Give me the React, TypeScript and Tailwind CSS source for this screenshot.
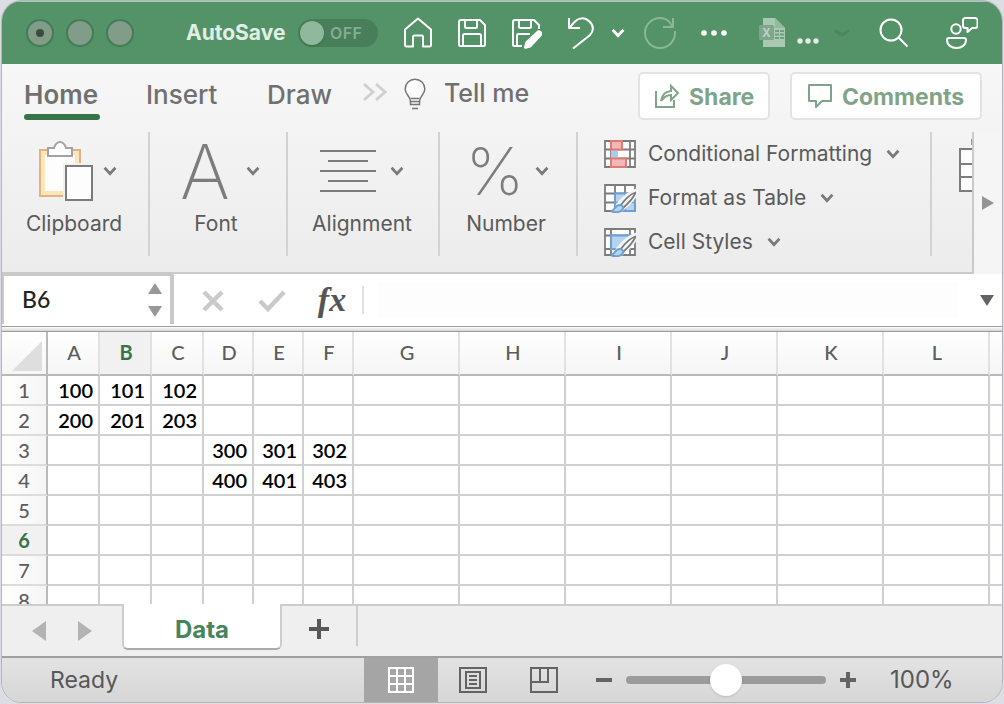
import React from "react";

const columns = ["A", "B", "C", "D", "E", "F", "G", "H", "I", "J", "K", "L", ""];

const rows: Record<string, number>[] = [
  { A: 100, B: 101, C: 102 },
  { A: 200, B: 201, C: 203 },
  { D: 300, E: 301, F: 302 },
  { D: 400, E: 401, F: 403 },
  {},
  {},
  {},
  {},
];

const activeColumn = "B";
const activeRow = 6;

function Chevron({ className = "text-[#7a7a7a]" }: { className?: string }) {
  return (
    <svg viewBox="0 0 14 10" className={`h-[10px] w-[14px] shrink-0 ${className}`} fill="none" stroke="currentColor" strokeWidth="2.8" aria-hidden="true">
      <path d="M1.6 1.8 7 7.6l5.4-5.8" />
    </svg>
  );
}

function IconButton({ label, className = "", children }: { label: string; className?: string; children: React.ReactNode }) {
  return (
    <button type="button" aria-label={label} className={`flex shrink-0 items-center justify-center ${className}`}>
      {children}
    </button>
  );
}

function Stroke({ children, className = "h-8 w-8 text-white" }: { children: React.ReactNode; className?: string }) {
  return (
    <svg viewBox="0 0 32 32" className={className} fill="none" stroke="currentColor" strokeWidth="2" strokeLinejoin="round" aria-hidden="true">
      {children}
    </svg>
  );
}

function TitleBar() {
  return (
    <header className="flex h-[63px] shrink-0 items-center border-t border-[#a9cdb4] bg-[#549368] pb-px pl-6">
      <div className="flex gap-3">
        <button type="button" aria-label="Close" className="flex size-7 items-center justify-center rounded-full border-2 border-[#427d54] bg-[#829c8a]">
          <span className="size-2 rounded-full bg-[#3a4c3f]" />
        </button>
        <button type="button" aria-label="Minimize" className="size-7 rounded-full border-2 border-[#427d54] bg-[#829c8a]" />
        <button type="button" aria-label="Zoom window" className="size-7 rounded-full border-2 border-[#427d54] bg-[#829c8a]" />
      </div>
      <span id="autosave" className="ml-[52px] w-[100px] whitespace-nowrap text-[21px] font-bold text-[#e2eee5]">AutoSave</span>
      <button type="button" role="switch" aria-checked="false" aria-labelledby="autosave" className="ml-3 flex h-7 w-20 shrink-0 items-center rounded-full bg-[#487e59] pl-[2px]">
        <span className="size-6 rounded-full bg-[#8fb99c] shadow" />
        <span className="ml-[6px] text-[16px] font-semibold tracking-wide text-[#83ae90]">OFF</span>
      </button>

      <div className="ml-6 flex items-center gap-[22px]">
        <IconButton label="Home page">
          <Stroke>
            <path d="M3 28V12.5L16 1.5l13 11V28a1.5 1.5 0 0 1-1.5 1.5H21V20a1.5 1.5 0 0 0-1.5-1.5h-7A1.5 1.5 0 0 0 11 20v9.500H4.500A1.500 1.500 0 0 1 3 28Z" />
          </Stroke>
        </IconButton>
        <IconButton label="Save">
          <Stroke>
            <path d="M5 3h19l5 5v19.500a1.500 1.500 0 0 1-1.500 1.500H4.500A1.500 1.500 0 0 1 3 27.500V5a2 2 0 0 1 2-2Z" />
            <path d="M9 3v6.500a1.500 1.500 0 0 0 1.500 1.500h9a1.500 1.500 0 0 0 1.500-1.500V3M7 29V18.500A1.500 1.500 0 0 1 8.500 17h15a1.500 1.500 0 0 1 1.500 1.500V29" />
          </Stroke>
        </IconButton>
        <IconButton label="Save as">
          <Stroke>
            <path d="M29 12V8l-5-5H5a2 2 0 0 0-2 2v22.500A1.500 1.500 0 0 0 4.500 29H12" />
            <path d="M9 3v6.500a1.500 1.500 0 0 0 1.500 1.500h9a1.500 1.500 0 0 0 1.500-1.500V3M7 29V18.500A1.500 1.500 0 0 1 8.500 17H20" />
            <path d="m15.500 30.300 1.500-5L27.500 15.500a1.800 1.800 0 0 1 2.800 2.400L20 29Z" fill="currentColor" strokeWidth="3" />
          </Stroke>
        </IconButton>
      </div>
      <IconButton label="Undo" className="ml-[22px]">
        <Stroke>
          <path d="M5 1v10h11M5.500 10.500 10.500 5C15 .2 21 .3 25.500 4.500c4.500 4.300 4.500 9.500.3 13.700L9 31.500" />
        </Stroke>
      </IconButton>
      <IconButton label="Undo history" className="ml-[15px]">
        <Chevron className="text-white" />
      </IconButton>
      <IconButton label="Redo" className="ml-[19px]">
        <Stroke className="h-8 w-8 text-[#8ab798]">
          <path d="M29 1v9H19M28.500 10C26 4 21.500 1 16 1A15 15 0 1 0 31 16v-2" />
        </Stroke>
      </IconButton>
      <IconButton label="More commands" className="ml-6">
        <svg viewBox="0 0 28 8" className="h-2 w-7 fill-white" aria-hidden="true">
          <circle cx="4" cy="4" r="2.800" />
          <circle cx="14" cy="4" r="2.800" />
          <circle cx="24" cy="4" r="2.800" />
        </svg>
      </IconButton>
      <button type="button" className="ml-[30px] flex shrink-0 items-center" aria-label="Document menu">
        <svg viewBox="0 0 28 32" className="h-8 w-7" aria-hidden="true">
          <path d="M5 1h12l10 10v19H5Z" fill="#a9c9b3" />
          <path d="M17 1v10h10Z" fill="#93b99f" />
          <path d="M17 13h4v2h-4zm5 0h4v2h-4zm-5 3.500h4v2h-4zm5 0h4v2h-4zm-5 3.500h4v2h-4zm5 0h4v2h-4z" fill="#6fa07f" />
          <rect x="1" y="8" width="15" height="15" rx="1.500" fill="#7fa68c" />
          <text x="8.500" y="20" textAnchor="middle" fontSize="12" fontWeight="700" fill="#b9d3c1">X</text>
        </svg>
        <svg viewBox="0 0 24 8" className="mt-4 ml-[10px] h-2 w-6 fill-[#e2eee5]" aria-hidden="true">
          <circle cx="4" cy="4" r="2.700" />
          <circle cx="12" cy="4" r="2.700" />
          <circle cx="20" cy="4" r="2.700" />
        </svg>
        <svg viewBox="0 0 16 8" className="ml-[14px] h-2 w-4" fill="none" stroke="#4a8660" strokeWidth="3" aria-hidden="true">
          <path d="m1 1.500 7 4.500 7-4.500" />
        </svg>
      </button>
      <div className="ml-auto flex items-center gap-9 pr-6">
        <IconButton label="Search">
          <Stroke>
            <circle cx="13" cy="13" r="10.500" />
            <path d="m20.500 20.500 9 9" />
          </Stroke>
        </IconButton>
        <IconButton label="Account">
          <Stroke>
            <circle cx="10" cy="12" r="4.700" />
            <path d="M3 21h15a2 2 0 0 1 2 2c0 5-4.500 8-9.500 8S1 28 1 23a2 2 0 0 1 2-2Z" />
            <path d="M19 1h10a2.500 2.500 0 0 1 2.500 2.500v5A2.500 2.500 0 0 1 29 11h-3l-4.500 4v-4H19.500A2.500 2.500 0 0 1 17 8.500v-5A2.500 2.500 0 0 1 19 1Z" />
          </Stroke>
        </IconButton>
      </div>
    </header>
  );
}

function RibbonTabs() {
  return (
    <div className="flex h-[68px] shrink-0 items-start pl-[22px] text-[26px] text-[#707070]">
      <nav aria-label="Ribbon tabs" className="flex items-start">
        <a href="#home" aria-current="page" className="flex h-14 w-19 flex-col whitespace-nowrap pt-[10px] font-semibold">
          <span className="flex flex-1 items-center">Home</span>
          <span className="h-[6px] rounded-full bg-[#38734a]" />
        </a>
        <a href="#insert" className="ml-[46px] flex h-[50px] w-[74px] items-center pt-[10px] font-medium">Insert</a>
        <a href="#draw" className="ml-[47px] flex h-[50px] w-[65px] items-center pt-[10px] font-medium">Draw</a>
      </nav>
      <IconButton label="More tabs" className="ml-[30px] h-14">
        <svg viewBox="0 0 26 20" className="h-5 w-[26px]" fill="none" stroke="#d0d0d0" strokeWidth="3" aria-hidden="true">
          <path d="m2 2 9 8-9 8M14 2l9 8-9 8" />
        </svg>
      </IconButton>
      <button type="button" className="ml-4 flex h-[50px] items-center pt-[10px] font-medium">
        <svg viewBox="0 0 22 32" className="h-8 w-[22px]" fill="none" stroke="#767676" strokeWidth="1.500" aria-hidden="true">
          <path d="M6.500 23.500C6.500 18 1.200 17 1.200 11a9.800 9.800 0 0 1 19.600 0c0 6-5.300 7-5.300 12.500Z" fill="#fdfdfd" />
          <path d="M6.500 20.500h9M6.500 23v3.500h9V23M8 30.500h6" />
        </svg>
        <span className="ml-[18px] text-[25px]">Tell me</span>
      </button>
      <div className="ml-auto flex gap-5 pt-2 pr-5 text-[23px] font-bold text-[#80a48a]">
        <button type="button" className="flex h-12 w-[132px] items-center rounded-[5px] border-2 border-[#e3e3e3] bg-white pl-[14px]">
          <svg viewBox="0 0 26 26" className="h-[26px] w-[26px]" fill="none" stroke="currentColor" strokeWidth="2" aria-hidden="true">
            <path d="M2 8v16h18v-7M7 18c1-6 4-9.500 10-10V3l7 7-7 7v-5c-4 0-7 2-10 6Z" />
          </svg>
          <span className="ml-[9px] pt-[2px]">Share</span>
        </button>
        <button type="button" className="flex h-12 w-[192px] items-center rounded-[5px] border-2 border-[#e3e3e3] bg-white pl-4">
          <svg viewBox="0 0 24 26" className="h-[26px] w-6" fill="none" stroke="currentColor" strokeWidth="2" strokeLinejoin="round" aria-hidden="true">
            <path d="M1 2h22v16H14l-6 6v-6H1Z" />
          </svg>
          <span className="ml-[10px] pt-[2px]">Comments</span>
        </button>
      </div>
    </div>
  );
}

function RibbonGroup({ label, className, children }: { label: string; className: string; children: React.ReactNode }) {
  return (
    <button type="button" className={`flex h-31 shrink-0 flex-col items-center border-r-2 border-[#d2d2d2] ${className}`}>
      <span className="flex h-[78px] items-center">{children}</span>
      <span className="h-7 whitespace-nowrap text-[21px] leading-7">{label}</span>
    </button>
  );
}

function Brush() {
  return (
    <g>
      <path d="M31.500 8C25 10 18 17 14 22l4 4c6-5 12-10 14-16Z" fill="#f3f3f3" stroke="#f3f3f3" strokeWidth="4" />
      <path d="M31.500 9.500c-5 1.500-11 7.500-15 13l2.500 2.500c5-4.500 10.500-9.500 12.500-15.500Z" fill="#f6f6f6" stroke="#7a7a7a" strokeWidth="1.800" />
      <path d="M7 28c4 0 3.500-6 8.500-6 3.500 0 4.500 2.500 3 4.500-2 3-7.500 3.500-11.500 1.500Z" fill="#b6d4ef" stroke="#6f9fd2" strokeWidth="2" />
    </g>
  );
}

function StyleRow({ label, children }: { label: string; children: React.ReactNode }) {
  return (
    <button type="button" className="flex h-11 shrink-0 items-center whitespace-nowrap text-[21px]">
      <svg viewBox="0 0 32 30" className="h-[30px] w-8 shrink-0" fill="none" aria-hidden="true">{children}</svg>
      <span className="mr-[14px] ml-3">{label}</span>
      <Chevron />
    </button>
  );
}

function Ribbon() {
  return (
    <div className="flex h-[142px] shrink-0 text-[#5a5a5a]">
      <div className="flex min-w-0 flex-1 overflow-hidden border-r-2 border-b-2 border-[#cacaca]">
        <RibbonGroup label="Clipboard" className="w-[148px] pr-[2px]">
          <svg viewBox="0 0 54 60" className="mr-[10px] ml-2 h-[60px] w-[54px]" aria-hidden="true">
            <path d="M1 9h40v46H1Z" fill="#f8e7b8" stroke="#e8b07f" strokeWidth="2" />
            <path d="M6 14h30v36H6Z" fill="#fdfdfd" />
            <path d="M24 22h30v38H24Z" fill="#f1f1f1" />
            <path d="M9 7h6c1-3 3-6 6-6s5 3 6 6h6v8H9Z" fill="#fdfdfd" stroke="#a3a3a3" strokeWidth="2" />
            <path d="M27 25h26v34H27Z" fill="#fdfdfd" stroke="#7c7c7c" strokeWidth="2" />
          </svg>
          <Chevron />
        </RibbonGroup>
        <RibbonGroup label="Font" className="w-[138px] pr-1">
          <span className="mr-[14px] ml-[6px] w-[54px] text-center text-[76px] leading-none font-extralight text-[#7c7c7c]">A</span>
          <Chevron />
        </RibbonGroup>
        <RibbonGroup label="Alignment" className="w-[152px] pr-[2px]">
          <svg viewBox="0 0 56 42" className="mr-[14px] h-[42px] w-14" stroke="#7c7c7c" strokeWidth="2" aria-hidden="true">
            <path d="M0 1h56M8 11h40M0 21h56M8 31h40M0 41h56" />
          </svg>
          <Chevron />
        </RibbonGroup>
        <RibbonGroup label="Number" className="w-[138px] pr-1">
          <span className="mr-[13px] ml-[2px] w-[56px] text-center text-[66px] leading-none font-extralight text-[#7c7c7c]">%</span>
          <Chevron />
        </RibbonGroup>
        <div className="flex h-31 w-[354px] shrink-0 flex-col border-r-2 border-[#d2d2d2] pl-[26px]">
          <StyleRow label="Conditional Formatting">
            <path d="M1 2h30v26H1ZM7 2v26M26 2v26M1 10.500h30M1 19.500h30" fill="#fdfdfd" stroke="#7c7c7c" strokeWidth="1.800" />
            <path d="M7 11h7v8H7Z" fill="#a9cdef" />
            <path d="M7 2h11v8.500H7ZM7 19.500h15V28H7Z" fill="#f3b7b7" stroke="#dd7b74" strokeWidth="2" />
          </StyleRow>
          <StyleRow label="Format as Table">
            <path d="M1 2h30v26H1ZM11 2v26M21 2v26M1 10.500h30M1 19.500h30" fill="#fdfdfd" stroke="#7c7c7c" strokeWidth="1.800" />
            <path d="M11 10.500h20V28H11Z" fill="#b6d4ef" stroke="#6f9fd2" strokeWidth="2" />
            <path d="M21 10v18M11 19.500h20" stroke="#6f9fd2" strokeWidth="1.600" />
            <Brush />
          </StyleRow>
          <StyleRow label="Cell Styles">
            <path d="M1 2h30v26H1ZM7 2v26M26 2v26M1 8.500h30M1 22h30" fill="#fdfdfd" stroke="#7c7c7c" strokeWidth="1.800" />
            <path d="M7 8.500h19V22H7Z" fill="#b6d4ef" stroke="#6f9fd2" strokeWidth="2" />
            <Brush />
          </StyleRow>
        </div>
        <IconButton label="Cells" className="ml-[27px] h-17">
          <svg viewBox="0 0 40 56" className="h-14 w-10 shrink-0" fill="#fdfdfd" stroke="#7c7c7c" strokeWidth="2" aria-hidden="true">
            <path d="M1 11h38v42H1ZM1 26h38M1 39h38" />
            <path d="M13 2h12v4H13Z" fill="#b6d4ef" stroke="#6f9fd2" />
          </svg>
        </IconButton>
      </div>
      <IconButton label="Scroll ribbon right" className="w-[28px] bg-[#f5f5f5]">
        <svg viewBox="0 0 12 14" className="h-[14px] w-3 fill-[#949494]" aria-hidden="true">
          <path d="m0 0 12 7-12 7Z" />
        </svg>
      </IconButton>
    </div>
  );
}

function FormulaBar() {
  return (
    <div className="flex h-[52px] shrink-0 bg-white">
      <div className="mb-[2px] flex w-[172px] shrink-0 border-t-2 border-r-4 border-l-2 border-[#c9c9c9]">
        <input aria-label="Name box" defaultValue="B6" className="w-[140px] min-w-0 bg-white pb-[2px] pl-[18px] font-['Lato',sans-serif] text-[23px] font-medium text-[#222222] outline-none" />
        <div className="flex flex-col items-center justify-center gap-3 pl-1">
          <IconButton label="Previous name">
            <svg viewBox="0 0 14 11" className="h-[11px] w-[14px] fill-[#989898]" aria-hidden="true"><path d="m7 0 7 11H0Z" /></svg>
          </IconButton>
          <IconButton label="Next name">
            <svg viewBox="0 0 14 11" className="h-[11px] w-[14px] fill-[#989898]" aria-hidden="true"><path d="M0 0h14L7 11Z" /></svg>
          </IconButton>
        </div>
      </div>
      <IconButton label="Cancel" className="ml-7">
        <svg viewBox="0 0 22 22" className="mt-[2px] h-[22px] w-[22px]" stroke="#cacaca" strokeWidth="4.500" aria-hidden="true"><path d="m2 2 18 18M20 2 2 20" /></svg>
      </IconButton>
      <IconButton label="Enter" className="ml-[34px]">
        <svg viewBox="0 0 28 22" className="mt-[2px] h-[22px] w-7" fill="none" stroke="#cacaca" strokeWidth="4.500" aria-hidden="true"><path d="m2 11 8 8L26 2" /></svg>
      </IconButton>
      <button type="button" aria-label="Insert function" className="ml-[30px] w-8 shrink-0 text-center font-['Liberation_Serif',serif] text-[34px] leading-none font-bold text-[#555555] italic">fx</button>
      <span className="my-3 ml-[14px] w-[2px] shrink-0 bg-[#e0e0e0]" />
      <input aria-label="Formula" className="my-2 ml-[14px] min-w-0 flex-1 bg-[#fdfdfd] outline-none" />
      <IconButton label="Expand formula bar" className="w-11 pl-[14px]">
        <svg viewBox="0 0 14 11" className="h-[11px] w-[14px] fill-[#636363]" aria-hidden="true"><path d="M0 0h14L7 11Z" /></svg>
      </IconButton>
    </div>
  );
}

function Sheet() {
  return (
    <main className="min-h-0 flex-1 overflow-hidden bg-white">
      <table className="w-full table-fixed border-separate border-spacing-0 font-['Lato',sans-serif] text-[20px]">
        <colgroup>
          <col className="w-[46px]" />
          <col className="w-[52px]" span={3} />
          <col className="w-[50px]" span={3} />
          <col className="w-[106px]" span={6} />
          <col />
        </colgroup>
        <thead>
          <tr className="h-11 bg-linear-to-b from-white to-[#f5f5f5] text-[#5c5c5c]">
            <th className="border-r-2 border-b-2 border-[#b9b9b9] p-0">
              <svg viewBox="0 0 44 42" className="h-[42px] w-11" aria-hidden="true"><path d="M40 9v30H10Z" fill="#dedede" /></svg>
            </th>
            {columns.map((name) => (
              <th
                key={name}
                scope="col"
                className={
                  name === activeColumn
                    ? "border-r-2 border-b-2 border-r-[#e2e2e2] border-b-[#b9b9b9] bg-[#f1f1f1] p-0 pb-[2px] pl-[2px] font-bold text-[#38734a]"
                    : "border-r-2 border-b-2 border-r-[#e2e2e2] border-b-[#b9b9b9] p-0 pb-[2px] pl-[2px] font-medium last:border-r-0"
                }
              >
                {name}
              </th>
            ))}
          </tr>
        </thead>
        <tbody>
          {rows.map((row, i) => (
            <tr key={i} className="h-[30px]">
              <th
                scope="row"
                className={
                  i + 1 === activeRow
                    ? "border-r-2 border-b-2 border-r-[#b9b9b9] border-b-[#dcdcdc] bg-[#f1f1f1] p-0 leading-7 font-bold text-[#38734a]"
                    : "border-r-2 border-b-2 border-r-[#b9b9b9] border-b-[#dcdcdc] bg-linear-to-r from-white to-[#f5f5f5] p-0 leading-7 font-medium text-[#5c5c5c]"
                }
              >
                {i + 1}
              </th>
              {columns.map((name) => (
                <td key={name} className="border-r-2 border-b-2 border-[#d0d0d0] p-0 pr-[5px] text-right leading-7 font-semibold text-black last:border-r-0">
                  {row[name]}
                </td>
              ))}
            </tr>
          ))}
        </tbody>
      </table>
    </main>
  );
}

function SheetTabs() {
  return (
    <div className="flex h-[52px] shrink-0 border-t-2 border-[#cdcdcd] bg-[#efefef]">
      <IconButton label="Previous sheet" className="ml-[30px]">
        <svg viewBox="0 0 14 20" className="h-5 w-[14px] fill-[#b3b3b3]" aria-hidden="true"><path d="M14 0v20L0 10Z" /></svg>
      </IconButton>
      <IconButton label="Next sheet" className="ml-8">
        <svg viewBox="0 0 14 20" className="h-5 w-[14px] fill-[#b3b3b3]" aria-hidden="true"><path d="M0 0v20l14-10Z" /></svg>
      </IconButton>
      <button type="button" className="-mt-[2px] ml-[30px] h-[46px] w-40 rounded-b-md border-x-2 border-b-2 border-[#cdcdcd] border-b-[#ababab] bg-white pt-2 text-[24px] font-bold text-[#468459]">Data</button>
      <IconButton label="Add sheet" className="mb-1 w-[74px]">
        <svg viewBox="0 0 20 20" className="size-5" stroke="#585858" strokeWidth="4" aria-hidden="true"><path d="M10 0v20M0 10h20" /></svg>
      </IconButton>
      <span className="mb-[10px] w-[2px] bg-[#cdcdcd]" />
    </div>
  );
}

function StatusBar() {
  return (
    <footer className="flex h-[46px] shrink-0 items-center border-t-2 border-[#a0a0a0] bg-linear-to-b from-[#e3e3e3] to-[#d6d6d6] text-[23px] text-[#575757]">
      <span className="flex-1 pl-12">Ready</span>
      <IconButton label="Normal view" className="h-full w-[74px] bg-[#a5a5a5]">
        <svg viewBox="0 0 26 26" className="size-[26px]" fill="none" stroke="#ffffff" strokeWidth="2" aria-hidden="true">
          <path d="M1 1h24v24H1ZM9 1v24M17 1v24M1 9h24M1 17h24" />
        </svg>
      </IconButton>
      <IconButton label="Page layout view" className="h-full w-[70px]">
        <svg viewBox="0 0 28 26" className="h-[26px] w-7" fill="none" stroke="#636363" strokeWidth="2" aria-hidden="true">
          <path d="M1 1h26v24H1ZM7 5h14v16H7ZM10 9h8M10 13h8M10 17h8" />
        </svg>
      </IconButton>
      <IconButton label="Page break view" className="h-full w-[72px]">
        <svg viewBox="0 0 28 26" className="h-[26px] w-7" fill="none" stroke="#636363" strokeWidth="2" aria-hidden="true">
          <path d="M1 1h26v24H1ZM10 1v14M18 1v14H1" />
        </svg>
      </IconButton>
      <IconButton label="Zoom out" className="ml-3 h-full w-6">
        <svg viewBox="0 0 16 16" className="size-4" stroke="#636363" strokeWidth="4" aria-hidden="true"><path d="M0 8h16" /></svg>
      </IconButton>
      <input
        type="range"
        aria-label="Zoom"
        min="0"
        max="200"
        defaultValue="100"
        className="mx-[10px] h-8 w-[200px] appearance-none bg-transparent [&::-webkit-slider-runnable-track]:h-2 [&::-webkit-slider-runnable-track]:rounded-full [&::-webkit-slider-runnable-track]:bg-[#9b9b9b] [&::-webkit-slider-thumb]:-mt-3 [&::-webkit-slider-thumb]:size-8 [&::-webkit-slider-thumb]:appearance-none [&::-webkit-slider-thumb]:rounded-full [&::-webkit-slider-thumb]:bg-white [&::-webkit-slider-thumb]:shadow"
      />
      <IconButton label="Zoom in" className="h-full w-6">
        <svg viewBox="0 0 16 16" className="size-4" stroke="#636363" strokeWidth="4" aria-hidden="true"><path d="M0 8h16M8 0v16" /></svg>
      </IconButton>
      <span className="ml-[30px] w-28 text-[24px]">100%</span>
    </footer>
  );
}

export default function App() {
  return (
    <div className="h-screen bg-[#dddde4] px-[2px] pt-px pb-[2px] font-['Inter',sans-serif]">
      <div className="flex h-full flex-col overflow-hidden rounded-[20px] bg-[#efefef] shadow-[0_0_0_1px_#b4b4bc]">
        <TitleBar />
        <div className="flex shrink-0 flex-col bg-linear-to-b from-[#f7f7f7] to-[#ececec]">
          <RibbonTabs />
          <Ribbon />
        </div>
        <FormulaBar />
        <div className="h-[6px] shrink-0 border-y border-[#9c9c9c] bg-linear-to-b from-white to-[#d4d4d4]" />
        <Sheet />
        <SheetTabs />
        <StatusBar />
      </div>
    </div>
  );
}
